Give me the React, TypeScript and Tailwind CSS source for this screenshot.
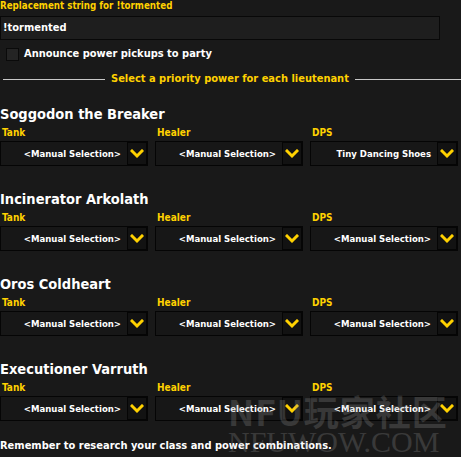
import React from 'react';

const lieutenants = [
  { name: 'Soggodon the Breaker', picks: ['<Manual Selection>', '<Manual Selection>', 'Tiny Dancing Shoes'] },
  { name: 'Incinerator Arkolath', picks: ['<Manual Selection>', '<Manual Selection>', '<Manual Selection>'] },
  { name: 'Oros Coldheart', picks: ['<Manual Selection>', '<Manual Selection>', '<Manual Selection>'] },
  { name: 'Executioner Varruth', picks: ['<Manual Selection>', '<Manual Selection>', '<Manual Selection>'] },
];

const roles = ['Tank', 'Healer', 'DPS'];

function Chevron() {
  return (
    <svg width="14" height="10" viewBox="0 0 14 10">
      <polyline points="2,2 7,7 12,2" fill="none" stroke="#ffd100" strokeWidth="3" strokeLinecap="square" />
    </svg>
  );
}

function Dropdown({ value }: { value: string }) {
  return (
    <div className="flex h-[25px] w-[148px] items-center border border-[#050505] bg-[#171717]">
      <span className="flex-1 truncate pr-[6px] text-right text-[9.5px] font-bold leading-[12px] text-white">{value}</span>
      <div className="flex h-[23px] w-[20px] items-center justify-center border border-[#050505] bg-[#121212]">
        <Chevron />
      </div>
    </div>
  );
}

export default function App() {
  return (
    <div className="relative h-[457px] w-[461px] overflow-hidden bg-[#191919] font-['DejaVu_Sans_Condensed','DejaVu_Sans',sans-serif] [font-stretch:condensed]">
      {/* Replacement string */}
      <div className="h-[12px] text-[9.7px] font-bold leading-[12px] text-[#ffd100]">Replacement string for !tormented</div>
      <div className="mt-[4px] flex h-[24px] w-[440px] items-center border border-[#080808] bg-[#1e1e1e] px-[2px] text-[11px] font-bold text-white">
        !tormented
      </div>

      {/* Checkbox */}
      <div className="mt-[7px] flex h-[14px] items-center">
        <div className="ml-[6px] h-[13px] w-[13px] border border-[#0a0a0a] bg-[#242424]" />
        <span className="ml-[5px] text-[11px] font-bold leading-[14px] text-white">Announce power pickups to party</span>
      </div>

      {/* Divider */}
      <div className="mt-[12px] flex h-[12px] items-center gap-[6px] pl-[3px]">
        <div className="h-px w-[102px] bg-[#c8c8c8]" />
        <span className="whitespace-nowrap text-[11px] font-bold leading-[12px] text-[#ffd100]">Select a priority power for each lieutenant</span>
        <div className="h-px flex-1 bg-[#c8c8c8]" />
      </div>

      {/* Lieutenants */}
      <div className="mt-[20px] flex flex-col gap-[24px]">
        {lieutenants.map((lt) => (
          <div key={lt.name}>
            <div className="h-[18px] text-[14.5px] font-bold leading-[18px] text-white">{lt.name}</div>
            <div className="mt-[4px] flex gap-[7px]">
              {roles.map((role, i) => (
                <div key={role} className="w-[148px]">
                  <div className="h-[12px] pl-[2px] text-[10px] font-bold leading-[12px] text-[#ffd100]">{role}</div>
                  <div className="mt-[2px]">
                    <Dropdown value={lt.picks[i]} />
                  </div>
                </div>
              ))}
            </div>
          </div>
        ))}
      </div>

      <div className="mt-[19px] h-[12px] text-[11px] font-bold leading-[12px] text-white">
        Remember to research your class and power combinations.
      </div>

      {/* Watermark */}
      <div className="pointer-events-none absolute left-[228px] top-[393px] select-none text-[#9a9a9a] opacity-25">
        <div className="font-['Noto_Sans_CJK_SC',sans-serif] text-[35px] font-bold leading-[36px] tracking-[1px]">NFU玩家社区</div>
        <div className="font-['Liberation_Serif',serif] text-[30px] leading-[26px]">NFUWOW.COM</div>
      </div>
    </div>
  );
}
